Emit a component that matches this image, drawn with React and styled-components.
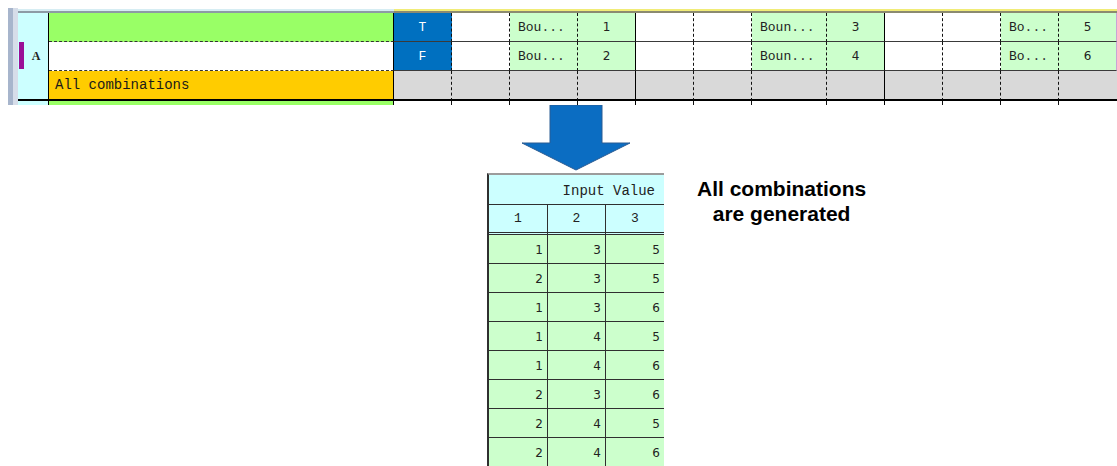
import React from 'react';
import styled, { createGlobalStyle } from 'styled-components';

const BLUE = '#0070c0';
const LIGHT_GREEN = '#ccffcc';
const CYAN = '#ccffff';

const GlobalStyle = createGlobalStyle`
  html, body {
    margin: 0;
    padding: 0;
    background: #fff;
  }
  body {
    overflow: hidden;
  }
`;

const Page = styled.div`
  width: 1117px;
  height: 466px;
  overflow: hidden;
  padding-top: 8px;
  box-sizing: border-box;
  font-family: "Liberation Mono", monospace;
`;

const rightBorders = {
  dash: '1px dashed #111',
  solid: '1px solid #000',
  edge: 'none',
  pink: '1px solid #c9a3d6',
};

const bottomBorders = {
  line: '1px solid #3a3a3a',
  dash: '1px dashed #333',
  black: '2px solid #000',
  none: 'none',
};

const Grid = styled.div`
  margin-left: 8px;
  display: grid;
  grid-template-columns: 10px 31px 345px ${(p) => p.$cols};
  grid-template-rows: 5px 29px 29px 30px 4px;
`;

const Strip = styled.div`
  grid-row: 1 / -1;
  grid-column: 1;
  background: linear-gradient(to right, #a7b5cc 0 5px, #d6dde9 5px);
`;

const HeadBar = styled.div`
  grid-column: ${(p) => (p.$side === 'left' ? '2 / 4' : '4 / -1')};
  background: ${(p) =>
    p.$side === 'left'
      ? 'linear-gradient(#fff 0 1px, #d6edf3 1px 3px, #8d9ba5 3px)'
      : 'linear-gradient(#fff 0 1px, #f1ec78 1px 3px, #8b8a70 3px)'};
`;

const KeyCell = styled.div`
  box-sizing: border-box;
  background: ${CYAN};
  border-right: 1px solid #000;
  border-bottom: ${(p) => bottomBorders[p.$bottom || 'none']};
  display: flex;
  align-items: flex-start;
`;

const Marker = styled.div`
  width: 5px;
  height: 27px;
  margin-left: 1px;
  background: #9a0f96;
`;

const KeyLetter = styled.span`
  flex: 1;
  align-self: center;
  text-align: center;
  font-family: "Liberation Serif", serif;
  font-weight: bold;
  font-size: 12px;
  color: #222;
`;

const NameCell = styled.div`
  box-sizing: border-box;
  background: ${(p) => p.$bg};
  border-right: 1px solid #000;
  border-bottom: ${(p) => bottomBorders[p.$bottom || 'none']};
  display: flex;
  align-items: center;
  padding-left: 6px;
  font-size: 14px;
  color: #1a1a1a;
`;

const DataCell = styled.div`
  box-sizing: border-box;
  background: ${(p) => p.$bg || '#fff'};
  border-right: ${(p) => rightBorders[p.$right]};
  border-bottom: ${(p) => bottomBorders[p.$bottom || 'none']};
  display: flex;
  align-items: center;
  justify-content: ${(p) => (p.$kind === 'label' ? 'flex-start' : 'center')};
  padding-left: ${(p) => (p.$kind === 'label' ? '8px' : '0')};
  overflow: hidden;
  white-space: nowrap;
  font-family: ${(p) =>
    p.$kind === 'num' ? '"DejaVu Sans", sans-serif' : '"Liberation Mono", monospace'};
  font-size: ${(p) => (p.$kind === 'num' ? '12px' : '13px')};
  color: ${(p) => (p.$kind === 'flag' ? '#fff' : '#222')};
`;

const Dots = styled.span`
  color: #333;
`;

const Lower = styled.div`
  display: flex;
  align-items: flex-start;
  padding-left: 487px;
`;

const Stack = styled.div`
  display: flex;
  flex-direction: column;
  width: 177px;
`;

const Table = styled.div`
  display: grid;
  grid-template-columns: 59px 58px 58px;
  border-top: 2px solid #9c9c9c;
  border-left: 2px solid #2f2f2f;
`;

const TitleCell = styled.div`
  grid-column: 1 / -1;
  box-sizing: border-box;
  height: 30px;
  background: ${CYAN};
  border-bottom: 1px solid #2f2f2f;
  display: flex;
  align-items: center;
  justify-content: flex-end;
  padding-right: 9px;
  padding-top: 2px;
  font-size: 14px;
  color: #222;
`;

const HeadCell = styled.div`
  box-sizing: border-box;
  height: 30px;
  background: ${CYAN};
  border-bottom: 3px double #2f2f2f;
  border-right: ${(p) => (p.$last ? 'none' : '1px solid #2f2f2f')};
  display: flex;
  align-items: center;
  justify-content: center;
  font-size: 13px;
  color: #222;
`;

const ValueCell = styled.div`
  box-sizing: border-box;
  height: 29px;
  background: ${LIGHT_GREEN};
  border-bottom: 1px solid #2f2f2f;
  border-right: ${(p) => (p.$last ? 'none' : '1px solid #2f2f2f')};
  display: flex;
  align-items: center;
  justify-content: flex-end;
  padding-right: 4px;
  padding-top: 2px;
  font-family: "DejaVu Sans", sans-serif;
  font-size: 12px;
  color: #222;
`;

const Caption = styled.div`
  margin-left: 33px;
  margin-top: 71px;
  font-family: "Liberation Sans", Arial, sans-serif;
  font-weight: bold;
  font-size: 21px;
  line-height: 25px;
  text-align: center;
  color: #000;
`;

const label = (t) => ({ bg: LIGHT_GREEN, t, kind: 'label' });
const num = (t) => ({ bg: LIGHT_GREEN, t, kind: 'num' });
const empty = {};

const columns = [
  { w: 58, right: 'dash', cells: [{ bg: BLUE, t: 'T', kind: 'flag' }, { bg: BLUE, t: 'F', kind: 'flag' }] },
  { w: 58, right: 'dash', cells: [empty, empty] },
  { w: 68, right: 'dash', cells: [label('Bou'), label('Bou')] },
  { w: 58, right: 'solid', cells: [num('1'), num('2')] },
  { w: 58, right: 'dash', cells: [empty, empty] },
  { w: 58, right: 'dash', cells: [empty, empty] },
  { w: 75, right: 'dash', cells: [label('Boun'), label('Boun')] },
  { w: 58, right: 'solid', cells: [num('3'), num('4')] },
  { w: 58, right: 'dash', cells: [empty, empty] },
  { w: 58, right: 'dash', cells: [empty, empty] },
  { w: 58, right: 'dash', cells: [label('Bo'), label('Bo')] },
  { w: 58, right: 'edge', cells: [num('5'), num('6')] },
];

const combos = [
  [1, 3, 5],
  [2, 3, 5],
  [1, 3, 6],
  [1, 4, 5],
  [1, 4, 6],
  [2, 3, 6],
  [2, 4, 5],
  [2, 4, 6],
];

const DataRow = ({ row }) =>
  columns.map((col, i) => {
    const c = col.cells[row];
    const right = col.right === 'edge' ? 'pink' : col.right;
    return (
      <DataCell key={i} $bg={c.bg} $kind={c.kind} $right={right} $bottom="line">
        {c.t}
        {c.kind === 'label' && <Dots>...</Dots>}
      </DataCell>
    );
  });

const Arrow = () => (
  <svg width="177" height="68" viewBox="0 0 177 68">
    <polygon
      points="63,0 115,0 115,38 143,38 89,65 35,38 63,38"
      fill="#0b6dc2"
      stroke="#2b5c93"
      strokeWidth="1"
    />
  </svg>
);

export default function App() {
  const cols = columns.map((c) => c.w + 'px').join(' ');
  return (
    <Page>
      <GlobalStyle />
      <Grid $cols={cols}>
        <Strip />
        <HeadBar $side="left" />
        <HeadBar $side="right" />

        <KeyCell />
        <NameCell $bg="#99ff66" $bottom="dash" />
        <DataRow row={0} />

        <KeyCell>
          <Marker />
          <KeyLetter>A</KeyLetter>
        </KeyCell>
        <NameCell $bg="#fff" $bottom="dash" />
        <DataRow row={1} />

        <KeyCell $bottom="black" />
        <NameCell $bg="#ffcc00" $bottom="black">All combinations</NameCell>
        {columns.map((col, i) => (
          <DataCell key={i} $bg="#d9d9d9" $right={col.right} $bottom="black" />
        ))}

        <KeyCell />
        <NameCell $bg="#99ff66" />
        {columns.map((col, i) => (
          <DataCell key={i} $right={col.right} />
        ))}
      </Grid>

      <Lower>
        <Stack>
          <Arrow />
          <Table>
            <TitleCell>Input Value</TitleCell>
            <HeadCell>1</HeadCell>
            <HeadCell>2</HeadCell>
            <HeadCell $last>3</HeadCell>
            {combos.map((r, i) =>
              r.map((v, j) => (
                <ValueCell key={i + '-' + j} $last={j === 2}>
                  {v}
                </ValueCell>
              ))
            )}
          </Table>
        </Stack>
        <Caption>
          All combinations
          <br />
          are generated
        </Caption>
      </Lower>
    </Page>
  );
}
